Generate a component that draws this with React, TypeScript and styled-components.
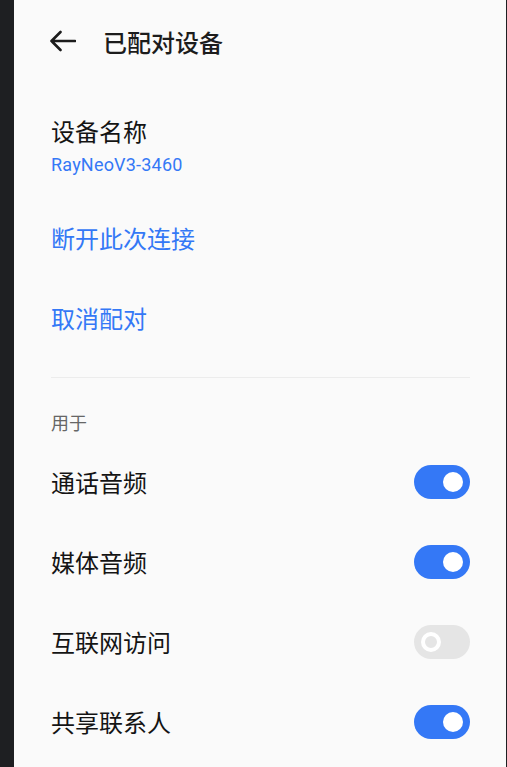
import styled, { createGlobalStyle } from 'styled-components';

const GlobalStyle = createGlobalStyle`
  html, body {
    margin: 0;
    padding: 0;
    background: #1e1f22;
  }
  * {
    box-sizing: border-box;
  }
`;

const BLUE = '#3478f6';

interface ToggleProps {
  $on: boolean;
}

const usages = [
  { label: '通话音频', on: true },
  { label: '媒体音频', on: true },
  { label: '互联网访问', on: false },
  { label: '共享联系人', on: true },
];

function BackArrow() {
  return (
    <svg width="27" height="22" viewBox="0 0 27 22" fill="none">
      <path
        d="M2.5 11H26M11.5 2L2.5 11L11.5 20"
        stroke="#1c1c1c"
        strokeWidth="2.6"
        strokeLinecap="round"
        strokeLinejoin="round"
      />
    </svg>
  );
}

export default function App() {
  return (
    <>
      <GlobalStyle />
      <Screen>
        <Gutter />
        <Panel>
          <Header>
            <BackButton>
              <BackArrow />
            </BackButton>
            <Title>已配对设备</Title>
          </Header>

          <NameBlock>
            <ItemLabel>设备名称</ItemLabel>
            <DeviceName>RayNeoV3-3460</DeviceName>
          </NameBlock>

          <ActionGroup>
            <ActionRow>断开此次连接</ActionRow>
            <ActionRow>取消配对</ActionRow>
          </ActionGroup>

          <Divider />

          <SectionLabel>用于</SectionLabel>
          {usages.map((u) => (
            <SwitchRow key={u.label}>
              <ItemLabel>{u.label}</ItemLabel>
              <Toggle $on={u.on}>
                <Knob $on={u.on} />
              </Toggle>
            </SwitchRow>
          ))}
        </Panel>
      </Screen>
    </>
  );
}

const Screen = styled.div`
  display: flex;
  width: 507px;
  height: 767px;
  overflow: hidden;
  background: #1e1f22;
  font-family: Roboto, 'Noto Sans CJK SC', sans-serif;
`;

const Gutter = styled.div`
  width: 14px;
  flex-shrink: 0;
`;

const Panel = styled.div`
  flex: 1;
  margin-right: 1.5px;
  background: #fafafa;
  padding: 0 36px 0 37px;
  display: flex;
  flex-direction: column;
`;

const Header = styled.div`
  height: 84px;
  display: flex;
  align-items: center;
  gap: 27px;
`;

const BackButton = styled.div`
  display: flex;
  align-items: center;
  margin-left: -2px;
  margin-top: -2px;
`;

const Title = styled.div`
  font-family: 'Noto Sans CJK SC', sans-serif;
  font-size: 24px;
  font-weight: 500;
  color: #1c1c1c;
  line-height: 32px;
`;

const NameBlock = styled.div`
  padding-top: 31px;
  display: flex;
  flex-direction: column;
`;

const ItemLabel = styled.div`
  font-family: 'Noto Sans CJK SC', sans-serif;
  font-size: 24px;
  color: #141414;
  line-height: 32px;
`;

const DeviceName = styled.div`
  margin-top: 6px;
  font-family: Roboto, sans-serif;
  font-size: 18px;
  letter-spacing: 0.2px;
  line-height: 24px;
  color: ${BLUE};
`;

const ActionGroup = styled.div`
  margin-top: 20px;
  display: flex;
  flex-direction: column;
`;

const ActionRow = styled.div`
  height: 80px;
  display: flex;
  align-items: center;
  font-family: 'Noto Sans CJK SC', sans-serif;
  font-size: 24px;
  color: ${BLUE};
`;

const Divider = styled.div`
  height: 1px;
  background: #ececec;
  margin-top: 20px;
`;

const SectionLabel = styled.div`
  margin-top: 32px;
  font-family: 'Noto Sans CJK SC', sans-serif;
  font-size: 18px;
  line-height: 24px;
  color: #666666;
  margin-bottom: 8px;
`;

const SwitchRow = styled.div`
  height: 80px;
  display: flex;
  align-items: center;
  justify-content: space-between;
`;

const Toggle = styled.div<ToggleProps>`
  position: relative;
  width: 56px;
  height: 34px;
  border-radius: 17px;
  background: ${(p) => (p.$on ? BLUE : '#e5e5e5')};
  flex-shrink: 0;
`;

const Knob = styled.div<ToggleProps>`
  position: absolute;
  top: 7px;
  left: ${(p) => (p.$on ? '29px' : '7px')};
  width: 20px;
  height: 20px;
  border-radius: 50%;
  background: ${(p) => (p.$on ? '#ffffff' : 'transparent')};
  border: ${(p) => (p.$on ? 'none' : '4px solid #ffffff')};
`;
